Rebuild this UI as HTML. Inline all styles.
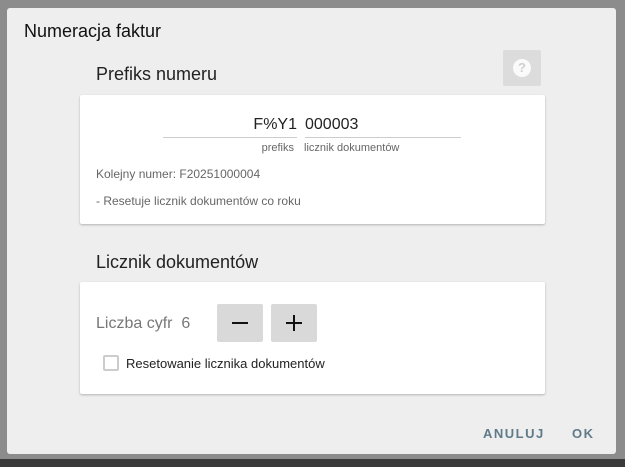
<!DOCTYPE html>
<html><head><meta charset="utf-8"><style>
*{margin:0;padding:0;box-sizing:border-box}
body{width:625px;height:467px;background:#8c8c8c;font-family:"Liberation Sans",sans-serif;position:relative;overflow:hidden}
.bot{position:absolute;left:0;right:0;top:459px;bottom:0;background:#3a3a3a}
.dlg{position:absolute;left:7px;top:8px;width:609px;height:446px;background:#eeeeee;border-radius:3px}
.a{position:absolute;white-space:nowrap}
.card{position:absolute;left:73px;width:465px;background:#fff;border-radius:2px;box-shadow:0 1px 2px rgba(0,0,0,.25)}
.btn{position:absolute;background:#d9d9d9;border-radius:2px}
</style></head><body>
<div class="bot"></div>
<div class="dlg">
<div class="a" style="left:17px;top:13px;font-size:18px;color:#111">Numeracja faktur</div>
<div class="a" style="left:89px;top:56px;font-size:18px;color:#222">Prefiks numeru</div>
<div class="btn" style="left:496px;top:42px;width:38px;height:36px;background:#dcdcdc"><div style="position:absolute;left:10px;top:9px;width:18px;height:18px;border-radius:50%;background:#fafafa;color:#d0d0d0;font-weight:bold;font-size:13px;text-align:center;line-height:18px">?</div></div>
<div class="card" style="top:87px;height:129px">
<div class="a" style="left:83px;top:21px;width:134px;text-align:right;font-size:16px;color:#222">F%Y1</div>
<div class="a" style="left:225px;top:21px;font-size:16px;color:#222">000003</div>
<div class="a" style="left:83px;top:42px;width:134px;height:1px;background:#ccc"></div>
<div class="a" style="left:225px;top:42px;width:156px;height:1px;background:#ccc"></div>
<div class="a" style="left:83px;top:47px;width:131px;text-align:right;font-size:11px;color:#666">prefiks</div>
<div class="a" style="left:224px;top:47px;font-size:11px;color:#666">licznik dokumentów</div>
<div class="a" style="left:16px;top:72px;font-size:12px;color:#666">Kolejny numer: F20251000004</div>
<div class="a" style="left:16px;top:99px;font-size:12px;color:#666">- Resetuje licznik dokumentów co roku</div>
</div>
<div class="a" style="left:89px;top:244px;font-size:18px;color:#222">Licznik dokumentów</div>
<div class="card" style="top:274px;height:112px">
<div class="a" style="left:16px;top:33px;font-size:16px;color:#777">Liczba cyfr&nbsp;&nbsp;6</div>
<div class="btn" style="left:137px;top:22px;width:46px;height:38px"><div style="position:absolute;left:15px;top:18px;width:16px;height:2px;background:#111"></div></div>
<div class="btn" style="left:191px;top:22px;width:46px;height:38px"><div style="position:absolute;left:15px;top:18px;width:16px;height:2px;background:#111"></div><div style="position:absolute;left:22px;top:11px;width:2px;height:16px;background:#111"></div></div>
<div class="a" style="left:23px;top:73px;width:16px;height:16px;border:2px solid #ccc;border-radius:2px"></div>
<div class="a" style="left:46px;top:74px;font-size:13px;color:#222">Resetowanie licznika dokumentów</div>
</div>
<div class="a" style="left:476px;top:418px;font-size:13px;font-weight:bold;color:#5f7a8a;letter-spacing:1.5px">ANULUJ</div>
<div class="a" style="left:565px;top:418px;font-size:13px;font-weight:bold;color:#5f7a8a;letter-spacing:1.5px">OK</div>
</div>
</body></html>
